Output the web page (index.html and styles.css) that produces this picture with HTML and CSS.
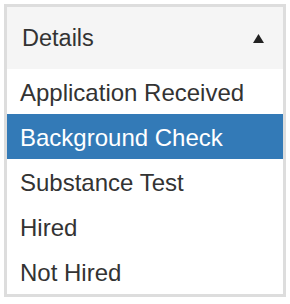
FILE: index.html
```html
<!DOCTYPE html>
<html>
<head>
<meta charset="utf-8">
<link rel="stylesheet" href="styles.css">
</head>
<body>
<div class="select">
  <div class="select-head">
    <span class="select-label">Details</span>
    <svg class="caret" width="11" height="9" viewBox="0 0 11 9"><polygon points="5.5,0 11,9 0,9" fill="#222"/></svg>
  </div>
  <ul class="options">
    <li class="option">Application Received</li>
    <li class="option active">Background Check</li>
    <li class="option">Substance Test</li>
    <li class="option">Hired</li>
    <li class="option">Not Hired</li>
  </ul>
</div>
</body>
</html>
```
FILE: styles.css
```css
html, body {
  margin: 0;
  padding: 0;
  background: #fff;
}
body {
  padding: 4px 0 0 4px;
  font-family: "Liberation Sans", Arial, sans-serif;
  color: #333;
}
.select {
  width: 276px;
  border: 3px solid #ddd;
}
.select-head {
  height: 62px;
  background: #f5f5f5;
  display: flex;
  align-items: center;
  justify-content: space-between;
  padding: 1px 19px 0 15px;
  box-sizing: border-box;
}
.select-label {
  font-size: 23.5px;
}
.caret {
  display: block;
}
.options {
  list-style: none;
  margin: 0;
  padding: 0;
}
.option {
  height: 45px;
  line-height: 47px;
  font-size: 24px;
  padding-left: 13px;
  overflow: hidden;
}
.option.active {
  background: #337ab7;
  color: #fff;
}
```
